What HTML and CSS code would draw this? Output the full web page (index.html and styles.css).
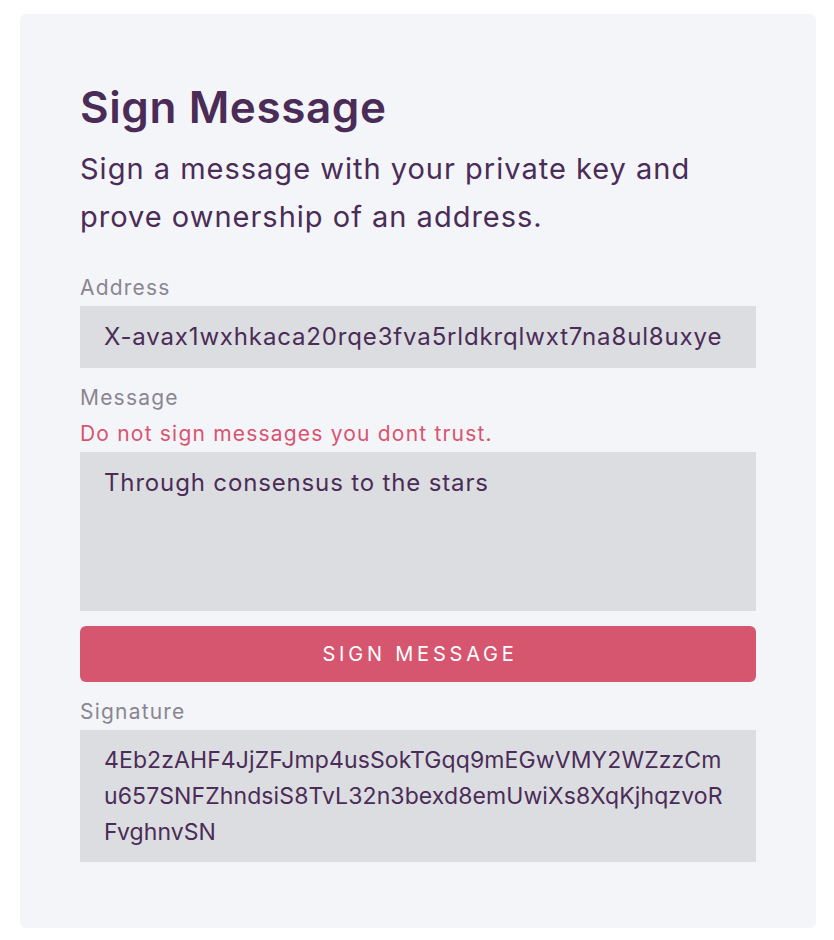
FILE: index.html
```html
<!DOCTYPE html>
<html>
<head>
  <title>Sign Message</title>
  <link rel="stylesheet" href="styles.css">
</head>
<body>
  <div class="card">
    <h1>Sign Message</h1>
    <p class="intro">Sign a message with your private key and prove ownership of an address.</p>

    <!-- Address -->
    <label class="field-label">Address</label>
    <div class="field-box">X-avax1wxhkaca20rqe3fva5rldkrqlwxt7na8ul8uxye</div>

    <!-- Message -->
    <label class="field-label label-message" for="message">Message</label>
    <p class="warning">Do not sign messages you dont trust.</p>
    <textarea id="message" class="field-box message-input">Through consensus to the stars</textarea>

    <button class="sign-button">Sign Message</button>

    <!-- Signature output -->
    <label class="field-label">Signature</label>
    <div class="field-box signature">4Eb2zAHF4JjZFJmp4usSokTGqq9mEGwVMY2WZzzCm<br>u657SNFZhndsiS8TvL32n3bexd8emUwiXs8XqKjhqzvoR<br>FvghnvSN</div>
  </div>
</body>
</html>
```

FILE: styles.css
```css
/* Page */
body {
  margin: 0;
  padding: 14px 18px 12px 20px;
  background-color: #fff;
  font-family: Inter, "Noto Sans", sans-serif;
  color: #4a2c57;
}

/* Card */
.card {
  display: flex;
  flex-direction: column;
  padding: 67px 60px 66px;
  background-color: #f4f5f9;
  border-radius: 6px;
}

/* Heading */
h1 {
  margin: 0;
  font-size: 44px;
  font-weight: 600;
  line-height: 52px;
  letter-spacing: 0.6px;
}

.intro {
  margin: 12px 0 33px;
  font-size: 29px;
  line-height: 48px;
  letter-spacing: 1px;
}

/* Labels */
.field-label {
  font-size: 21px;
  line-height: 28px;
  letter-spacing: 1.2px;
  color: #8a8591;
  margin-bottom: 4px;
}

.label-message {
  margin-top: 16px;
  margin-bottom: 8px;
}

.warning {
  margin: 0 0 4px;
  font-size: 21px;
  line-height: 28px;
  letter-spacing: 1.2px;
  color: #d8546f;
}

/* Inputs */
.field-box {
  box-sizing: border-box;
  padding: 14px 24px;
  background-color: #dcdde1;
  font-family: inherit;
  font-size: 24px;
  line-height: 34px;
  letter-spacing: 0.85px;
  color: #4a2c57;
  border: none;
  border-radius: 0;
}

.message-input {
  height: 159px;
  margin: 0;
  resize: none;
  outline: none;
}

.signature {
  padding: 12px 24px;
  font-size: 23px;
  line-height: 36px;
  letter-spacing: 0.1px;
}

/* Button */
.sign-button {
  height: 56px;
  margin: 15px 0 16px;
  padding: 0 0 0 4px;
  background-color: #d6566f;
  color: #fff;
  border: none;
  border-radius: 6px;
  font-family: inherit;
  font-size: 20px;
  letter-spacing: 3.8px;
  text-transform: uppercase;
  cursor: pointer;
}
```
